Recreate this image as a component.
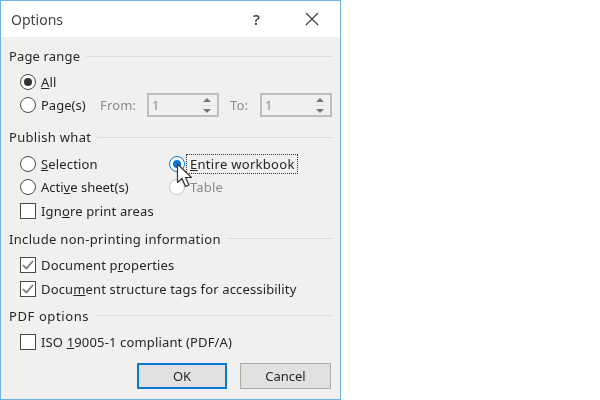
<div class="dialog">
  <header class="title">
    <span class="title-text">Options</span>
    <span class="help">?</span>
    <svg class="close" width="14" height="14" viewBox="0 0 14 14" aria-hidden="true"><path d="M1 1L13 13M13 1L1 13" stroke="#3a3a3a" stroke-width="1.2" fill="none"/></svg>
  </header>

  <main class="body">
    <section class="group range">
      <h2 class="legend"><span>Page range</span><i></i></h2>
      <div class="row"><span class="radio on"></span><span><u>A</u>ll</span></div>
      <div class="row">
        <span class="radio"></span><span class="pages">Pa<u>g</u>e(s)</span>
        <span class="muted from">From:</span>
        <span class="spin">
          <span class="val">1</span>
          <span class="arrows"><b class="up"></b><b class="down"></b></span>
        </span>
        <span class="muted to">To:</span>
        <span class="spin">
          <span class="val">1</span>
          <span class="arrows"><b class="up"></b><b class="down"></b></span>
        </span>
      </div>
    </section>

    <section class="group publish">
      <h2 class="legend wide"><span>Publish what</span><i></i></h2>
      <div class="cols">
        <div class="row"><span class="radio"></span><span><u>S</u>election</span></div>
        <div class="row"><span class="radio sel"></span><span class="focus"><u>E</u>ntire workbook</span></div>
        <div class="row"><span class="radio"></span><span class="tight">Acti<u>v</u>e sheet(s)</span></div>
        <div class="row dis"><span class="radio off"></span><span class="tbl">Table</span></div>
        <div class="row"><span class="check"></span><span>Ign<u>o</u>re print areas</span></div>
      </div>
    </section>

    <section class="group include">
      <h2 class="legend wide"><span>Include non-printing information</span><i></i></h2>
      <div class="row"><span class="check">
        <svg width="14" height="14" viewBox="0 0 14 14" aria-hidden="true"><path d="M2 7.2L5.4 10.6L12 3" stroke="#777" stroke-width="1.7" fill="none"/></svg>
      </span><span>Document p<u>r</u>operties</span></div>
      <div class="row"><span class="check">
        <svg width="14" height="14" viewBox="0 0 14 14" aria-hidden="true"><path d="M2 7.2L5.4 10.6L12 3" stroke="#777" stroke-width="1.7" fill="none"/></svg>
      </span><span>Docu<u>m</u>ent structure tags for accessibility</span></div>
    </section>

    <section class="group pdf">
      <h2 class="legend"><span class="pdf-label">PDF options</span><i></i></h2>
      <div class="row"><span class="check"></span><span>ISO <u>1</u>9005-1 compliant (PDF/A)</span></div>
    </section>

    <footer class="buttons">
      <button class="btn primary">OK</button>
      <button class="btn">Cancel</button>
    </footer>
  </main>

  <svg class="cursor" width="18" height="26" viewBox="0 0 18 26" aria-hidden="true">
    <path d="M1.5 1V19.5L6 15.5L9.5 23.5L13 22L9.5 14.5H15.5Z" fill="#fff" stroke="#333" stroke-width="1.2" stroke-linejoin="round"/>
  </svg>
</div>

<style>
  :global(body) { margin: 0; background: #fff; }
  .dialog {
    position: relative;
    box-sizing: border-box;
    width: 341px;
    height: 400px;
    border: 1px solid #6db4ec;
    background: #f0f0f0;
    font-family: "Noto Sans", "Open Sans", sans-serif;
    font-size: 13px;
    letter-spacing: 0.15px;
    color: #262626;
    display: flex;
    flex-direction: column;
    filter: blur(0.35px);
  }
  .title {
    height: 36px;
    flex: none;
    background: #fff;
    display: flex;
    align-items: center;
    padding-left: 10px;
    padding-right: 21px;
  }
  .title-text { font-size: 14px; letter-spacing: 0; color: #444; flex: 1; }
  .help { font-size: 15px; font-weight: 600; color: #444; margin-right: 45px; }
  .body { flex: 1; padding: 9px 8px 0 8px; display: flex; flex-direction: column; }
  .group { display: flex; flex-direction: column; }
  .legend {
    margin: 0;
    height: 20px;
    font: inherit;
    display: flex;
    align-items: center;
    gap: 6px;
  }
  .legend.wide { letter-spacing: 0.32px; }
  .pdf-label { letter-spacing: 0.6px; }
  .legend i { flex: 1; height: 1px; background: #dcdcdc; }
  .row {
    height: 23.5px;
    display: flex;
    align-items: center;
    padding-left: 11px;
    white-space: nowrap;
  }
  .range .legend { margin-bottom: 4px; }
  .radio {
    box-sizing: border-box;
    width: 16px; height: 16px;
    border: 1.5px solid #4a4a4a;
    border-radius: 50%;
    background: #fff;
    margin-right: 5px;
    flex: none;
    position: relative;
  }
  .radio.on::after, .radio.sel::after {
    content: "";
    position: absolute;
    inset: 3px;
    border-radius: 50%;
    background: #333;
  }
  .radio.sel { border-color: #0a78d7; }
  .radio.sel::after { background: #0a78d7; }
  .radio.off { border-color: #c8c8c8; }
  .check {
    box-sizing: border-box;
    width: 16px; height: 16px;
    border: 1.5px solid #4a4a4a;
    background: #fff;
    margin-right: 5px;
    flex: none;
    display: flex;
    align-items: center;
    justify-content: center;
  }
  .tight { letter-spacing: 0; }
  .pages { width: 59px; letter-spacing: 0; }
  .muted { color: #8a8a8a; }
  .from { width: 47px; }
  .to { padding-left: 11px; width: 30px; }
  .spin {
    box-sizing: border-box;
    width: 72px;
    height: 24px;
    border: 2px solid #bdbdbd;
    display: flex;
    align-items: center;
    color: #8a8a8a;
  }
  .val { flex: 1; padding-left: 3px; }
  .arrows {
    width: 19px;
    height: 20px;
    margin-right: 1px;
    display: flex;
    flex-direction: column;
    gap: 1px;
    background: #e4e4e4;
  }
  .arrows b {
    flex: 1;
    background: #f0f0f0;
    display: flex;
    align-items: center;
    justify-content: center;
  }
  .arrows b::after {
    content: "";
    border-left: 4px solid transparent;
    border-right: 4px solid transparent;
  }
  .up::after { border-bottom: 4px solid #777; }
  .down::after { border-top: 4px solid #777; }
  .publish { margin-top: 10px; }
  .cols { display: grid; grid-template-columns: 149px 1fr; margin-top: 5px; }
  .focus {
    outline: 1px dotted #333;
    padding: 0 2px 0 3px;
    line-height: 18px;
    margin-left: -3px;
    letter-spacing: 0.3px;
  }
  .tbl { color: #8a8a8a; }
  .include { margin-top: 6px; }
  .include .legend { margin-bottom: 5px; }
  .pdf { margin-top: 5px; }
  .pdf .legend { margin-bottom: 5px; }
  .buttons { display: flex; justify-content: flex-end; gap: 13px; margin-top: 9px; margin-right: 1px; }
  .btn {
    box-sizing: border-box;
    width: 91px;
    height: 26px;
    border: 1px solid #adadad;
    background: #e1e1e1;
    font: inherit;
    color: #262626;
    padding: 0;
  }
  .primary { border: 2px solid #0a78d7; width: 90px; }
  .cursor { position: absolute; left: 175px; top: 162px; }
</style>
